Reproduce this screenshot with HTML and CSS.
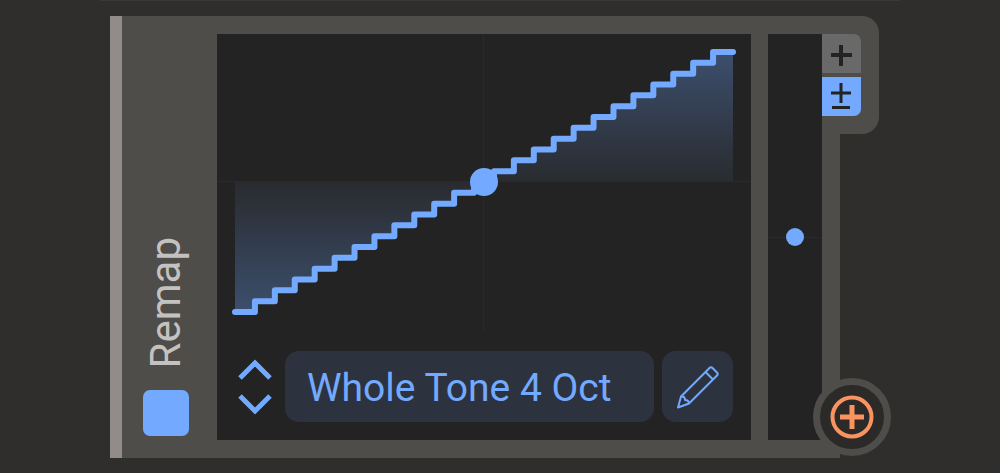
FILE: index.html
```html
<!DOCTYPE html>
<html lang="en">
<head>
    <meta charset="UTF-8">
    <meta name="viewport" content="width=device-width, initial-scale=1.0">
    <title>Remap</title>
    <link rel="stylesheet" href="styles.css">
</head>
<body>
    <main class="rack">
        <section class="module">
            <div class="side">
                <label class="title" for="enabled">Remap</label>
                <input class="power" type="checkbox" id="enabled" checked>
            </div>

            <!-- Curve and preset picker -->
            <div class="screen">
                <svg class="graph" viewBox="0 0 534 297">
                    <defs>
                        <linearGradient id="fade" gradientUnits="userSpaceOnUse" x1="0" y1="18" x2="0" y2="278">
                            <stop offset="0" stop-color="#3c4f6d"/>
                            <stop offset="0.5" stop-color="#292b2f"/>
                            <stop offset="1" stop-color="#3c4f6d"/>
                        </linearGradient>
                    </defs>
                    <path class="grid" d="M0 147.500H534M266.500 0V297"/>
                    <path fill="url(#fade)" d="M18 148V278h19.920v-10.833h19.920v-10.833h19.920v-10.833h19.920v-10.833h19.920v-10.833h19.920v-10.833h19.920v-10.833h19.920v-10.833h19.920v-10.833h19.920v-10.833h19.920v-10.833h19.920v-10.833h19.920v-10.833h19.920v-10.833h19.920v-10.833h19.920v-10.833h19.920v-10.833h19.920v-10.833h19.920v-10.833h19.920v-10.833h19.920v-10.833h19.920v-10.833h19.920v-10.833h19.920v-10.833h19.920V148z"/>
                    <path class="curve" d="M18 278h19.920v-10.833h19.920v-10.833h19.920v-10.833h19.920v-10.833h19.920v-10.833h19.920v-10.833h19.920v-10.833h19.920v-10.833h19.920v-10.833h19.920v-10.833h19.920v-10.833h19.920v-10.833h19.920v-10.833h19.920v-10.833h19.920v-10.833h19.920v-10.833h19.920v-10.833h19.920v-10.833h19.920v-10.833h19.920v-10.833h19.920v-10.833h19.920v-10.833h19.920v-10.833h19.920v-10.833h19.920"/>
                    <circle class="dot" cx="267" cy="148" r="14"/>
                </svg>
                <div class="controls">
                    <div class="stepper">
                        <button aria-label="Previous preset">
                            <svg width="34" height="22" viewBox="0 0 34 22"><path d="M2 19L17 4L32 19"/></svg>
                        </button>
                        <button aria-label="Next preset">
                            <svg width="34" height="22" viewBox="0 0 34 22"><path d="M2 3L17 18L32 3"/></svg>
                        </button>
                    </div>
                    <button class="preset">Whole Tone 4 Oct</button>
                    <button class="edit" aria-label="Edit curve">
                        <svg width="44" height="44" viewBox="0 0 44 44">
                            <path d="M2 42.500L5 31.500L33.500 3Q35 1.500 36.500 3L41 7.500Q42.500 9 41 10.500L13 38.500Z"/>
                            <path d="M5 31.500Q9 31 9 35Q13 35 13 38.500M29.500 7L37 14.500"/>
                        </svg>
                    </button>
                </div>
            </div>

            <div class="slider">
                <span class="handle"></span>
            </div>

            <!-- Polarity tab -->
            <div class="polarity">
                <button aria-label="Unipolar">
                    <svg width="39" height="39" viewBox="0 0 39 39"><path class="thick" d="M9 21H30M19 11V32"/></svg>
                </button>
                <button class="active" aria-label="Bipolar">
                    <svg width="39" height="39" viewBox="0 0 39 39"><path d="M9 16H29M19 6V26M10 30.500H28"/></svg>
                </button>
            </div>

            <button class="add" aria-label="Add modulation">
                <svg width="44" height="44" viewBox="0 0 44 44">
                    <circle cx="22" cy="22" r="19.500"/>
                    <path d="M10 22H34M22 10V34"/>
                </svg>
            </button>
        </section>
    </main>
</body>
</html>
```
FILE: styles.css
```css
* {
    box-sizing: border-box;
}
body {
    margin: 0;
    background: #2f2e2c;
    font-family: Roboto, sans-serif;
}
.rack {
    margin: 0 10%;
    padding: 15px 6% 15px 1%;
    border-top: 1px solid #3a3937;
    border-bottom: 1px solid #262423;
}
.module {
    position: relative;
    display: flex;
    padding: 18px 18px 18px 0;
    background: #4e4d4a;
    border-left: 12px solid #918c89;
}
button {
    padding: 0;
    border: none;
    background: none;
    font-family: inherit;
    cursor: pointer;
}
svg {
    display: block;
    fill: none;
}
.side {
    display: flex;
    flex-direction: column;
    justify-content: flex-end;
    gap: 22px;
    width: 95px;
    padding: 0 28px 4px 21px;
}
.title {
    writing-mode: vertical-rl;
    transform: rotate(180deg);
    font-size: 42px;
    line-height: 46px;
    color: #c4c2c0;
}
.power {
    appearance: none;
    width: 46px;
    height: 46px;
    margin: 0;
    border-radius: 7px;
    background: #555;
}
.power:checked {
    background: #73aaff;
}
.screen {
    flex: 1;
    background: #232323;
}
.graph {
    width: 100%;
}
.grid {
    stroke: #2a2a2a;
}
.curve {
    stroke: #73aaff;
    stroke-width: 6;
    stroke-linecap: round;
    stroke-linejoin: round;
}
.dot {
    fill: #73aaff;
}
.controls {
    display: flex;
    gap: 8px;
    padding: 20px 18px 18px 21px;
}
.stepper {
    display: flex;
    flex-direction: column;
    justify-content: center;
    gap: 12px;
    margin-right: 5px;
}
.stepper svg {
    stroke: #73aaff;
    stroke-width: 5;
}
.preset, .edit {
    height: 71px;
    border-radius: 14px;
    background: #2d333e;
    color: #73aaff;
}
.preset {
    flex: 1;
    padding: 2px 22px 0;
    font-size: 39px;
    text-align: left;
}
.edit {
    display: flex;
    align-items: center;
    justify-content: center;
    width: 71px;
}
.edit svg {
    stroke: #73aaff;
    stroke-width: 2;
    stroke-linejoin: round;
}
.slider {
    display: flex;
    align-items: center;
    justify-content: center;
    width: 54px;
    margin-left: 17px;
    background: linear-gradient(#2a2a2a, #2a2a2a) center / 100% 1px no-repeat #232323;
}
.handle {
    width: 18px;
    height: 18px;
    border-radius: 50%;
    background: #73aaff;
}
.polarity {
    position: absolute;
    top: 0;
    right: -39px;
    display: flex;
    flex-direction: column;
    gap: 4px;
    padding: 18px 18px 18px 0;
    border-radius: 0 17px 17px 0;
    background: #4e4d4a;
}
.polarity button {
    border-radius: 0 7px 0 0;
    background: #696969;
}
.polarity .active {
    border-radius: 0 0 7px 0;
    background: #73aaff;
}
.polarity svg {
    stroke: #232323;
    stroke-width: 3;
}
.polarity .thick {
    stroke-width: 4;
}
.add {
    position: absolute;
    right: -51px;
    bottom: 2px;
    display: flex;
    align-items: center;
    justify-content: center;
    width: 78px;
    height: 78px;
    border: 7px solid #4e4d4a;
    border-radius: 50%;
    background: #2b2a28;
}
.add svg {
    stroke: #f9935f;
    stroke-width: 4;
}
.add path {
    stroke-width: 5;
}
```
